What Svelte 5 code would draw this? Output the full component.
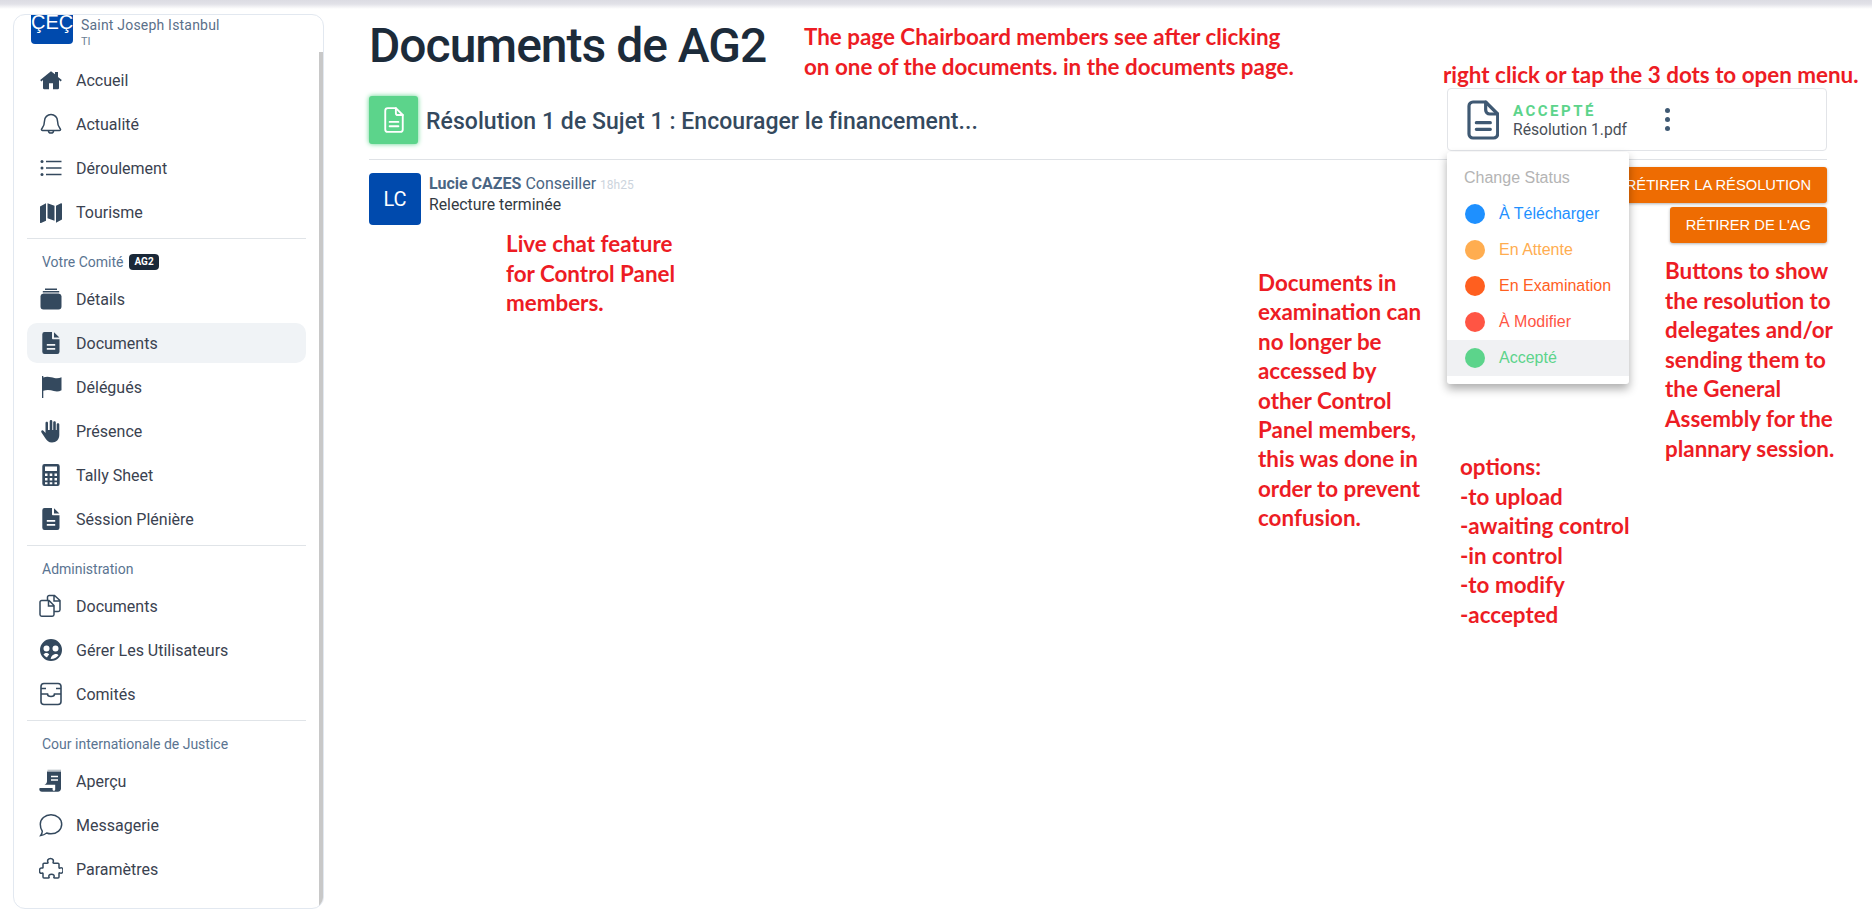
<script lang="ts">
  const ic = {
    home: '<path d="M12 3.200 1.200 12l1.100 1.400L4 12.100V20a1.200 1.200 0 0 0 1.200 1.200H10v-6h4v6h4.800A1.200 1.200 0 0 0 20 20v-7.900l1.700 1.300 1.100-1.400-3.800-3.100V4h-3v2.200Z"/>',
    bell: '<path fill="none" stroke="currentColor" stroke-width="1.500" d="M12 2.500a6.500 6.500 0 0 0-6.500 6.500c0 5.500-2.500 7-3 8.200-.2.700.2 1.300 1 1.300h17c.8 0 1.200-.6 1-1.300-.5-1.200-3-2.700-3-8.200A6.500 6.500 0 0 0 12 2.500Zm-2.600 16a2.600 2.600 0 0 0 5.200 0"/>',
    list: '<circle cx="3" cy="5.500" r="1.500"/><circle cx="3" cy="12" r="1.500"/><circle cx="3" cy="18.500" r="1.500"/><path d="M7 4.700h15.500v1.600H7zM7 11.200h15.500v1.600H7zM7 17.700h15.500v1.600H7z"/>',
    map: '<path d="M1 6.500 7 3.200v17.600l-5 2.200a.8.800 0 0 1-1-.8ZM8.500 3.200l7 2.600v15l-7-2.600ZM17 5.800l5-2.600a.8.800 0 0 1 1 .8v15.500l-6 3.300Z"/>',
    box: '<path d="M6 1.500h12v1.500H6zM3.800 4h16.400v1.600H3.800zM1.500 9a3 3 0 0 1 3-2.500h15a3 3 0 0 1 3 2.500v10.500a3 3 0 0 1-3 3h-15a3 3 0 0 1-3-3Z"/>',
    file: '<path fill-rule="evenodd" d="M5.500 1h7.500v6.200c0 .6.500 1.100 1.100 1.100h6.400v12.500a2.200 2.200 0 0 1-2.200 2.200H5.500a2.200 2.200 0 0 1-2.200-2.200V3.200A2.200 2.200 0 0 1 5.500 1Zm2.300 12v1.700h8.400V13Zm0 4v1.700h8.400V17ZM15 1.300l5.400 5.200H15Z"/>',
    flag: '<path d="M3 1h1.300v22H3ZM4.300 2.500c4-1.700 8-.2 11 .4 2.500.5 5.200.3 7.200-.7v13c-2.500 1.500-5.200 1.500-7.700.8-3-.8-6.500-1.700-10.500-.2Z"/>',
    hand: '<path d="M12 1c.8 0 1.300.6 1.300 1.300V11h.9V3.500c0-.8.600-1.300 1.300-1.300s1.300.5 1.300 1.300V11h.9V5.500c0-.8.600-1.300 1.300-1.300s1.300.5 1.300 1.300V16c0 4.500-3 7.500-7.300 7.500-3.500 0-5-1.700-6.500-4L2.500 13.500c-.5-.7-.3-1.500.3-1.900.6-.4 1.400-.3 1.900.4L6.500 14V4c0-.8.600-1.300 1.300-1.300S9 3.200 9 4v7h1.700V2.300C10.700 1.600 11.200 1 12 1Z"/>',
    calc: '<path fill-rule="evenodd" d="M5.500 1h13A2.200 2.200 0 0 1 20.700 3.200v17.600a2.200 2.200 0 0 1-2.200 2.200h-13a2.200 2.200 0 0 1-2.200-2.200V3.200A2.200 2.200 0 0 1 5.500 1ZM6 3.500V8h12V3.500ZM6 10.500v2.500h2.500v-2.500Zm4.700 0v2.500h2.600v-2.500Zm4.800 0v2.500H18v-2.500ZM6 15v2.500h2.500V15Zm4.700 0v2.500h2.600V15Zm4.800 0v2.500H18V15ZM6 19.300v2h2.500v-2Zm4.700 0v2h2.600v-2Zm4.800 0v2H18v-2Z"/>',
    docs: '<path fill="none" stroke="currentColor" stroke-width="1.500" d="M4 6.500h6l5 5v9a1.700 1.700 0 0 1-1.700 1.700H2.700A1.700 1.700 0 0 1 1 20.500V8.200A1.700 1.700 0 0 1 2.700 6.500Zm5.500 0v5.500H15M8.500 6V3.200a1.700 1.700 0 0 1 1.700-1.700h5.300L21 6.500v9.300a1.700 1.700 0 0 1-1.700 1.700H15M15 1.800v5.200h5.800"/>',
    users: '<path fill-rule="evenodd" d="M12 1a11 11 0 1 1 0 22 11 11 0 0 1 0-22ZM7.500 7.500a3 3 0 1 0 0 6 3 3 0 0 0 0-6Zm9 0a3 3 0 1 0 0 6 3 3 0 0 0 0-6ZM7.500 15c-1.500 0-2.500.6-3 1.500.9 1.200 2 2.300 3.500 3 .4-1.200 1.100-2.300 2.200-3.100-.7-.8-1.600-1.400-2.700-1.400Zm7.500 1.500c-1.500.5-3 2-3.300 4.500h.3c3.200 0 5.800-1.500 7.500-3.800-.8-1-2.500-1.500-4.500-.7Z"/>',
    inbox: '<path fill="none" stroke="currentColor" stroke-width="1.600" d="M5 1.500h14a3 3 0 0 1 3 3v15a3 3 0 0 1-3 3H5a3 3 0 0 1-3-3v-15a3 3 0 0 1 3-3ZM2 12h6.500c0 1.500 1.200 2.500 3.500 2.500s3.500-1 3.500-2.500H22M2 6.500h5M17 6.500h5"/>',
    scroll: '<path d="M8 2.500h14v17c0 2-1.200 3.200-3.200 3.200H3c-1.700 0-2.700-1-2.700-2.500 0-.6.200-1 .5-1.200h12.800v1.500c0 .8.600 1.300 1.300 1.300s1.300-.5 1.300-1.300v-4.700H5.500c1.200-.8 2.500-1.300 2.500-3.500Zm4 4.300v1.500h7V6.800Zm0 3.500v1.500h7v-1.500Z"/><path d="M8.500.8h13.500v1H8.500z" opacity=".45"/>',
    chat: '<path fill="none" stroke="currentColor" stroke-width="1.500" d="M12 1.800c6 0 10.700 4 10.700 9.500S18 20.800 12 20.800c-1.500 0-3-.3-4.300-.8-1.500 1.200-3.500 2.300-6 2.500 1-1.300 1.500-2.800 1.600-4.300C2 16.500 1.300 14 1.300 11.300 1.300 5.800 6 1.800 12 1.800Z"/>',
    puzzle: '<path fill="none" stroke="currentColor" stroke-width="1.500" stroke-linejoin="round" d="M9 5.500c-1-2 0-4 2.500-4s3.500 2 2.500 4c0 .5.300.7.800.7H19c.6 0 1 .4 1 1v3.300c0 .5.400.8.800.6 2-1 3.200 0 3.200 2.400s-1.300 3.300-3.200 2.400c-.4-.2-.8.100-.8.600V20c0 .6-.4 1-1 1h-3.500c-.5 0-.8-.3-.6-.8.800-1.700-.4-2.900-2.400-2.900s-3.200 1.200-2.400 2.900c.2.500-.1.800-.6.800H5c-.6 0-1-.4-1-1v-3.400c0-.5-.4-.8-.8-.6C1.300 16.800.5 15.700.5 13.800S1.300 10.500 3.200 11c.4.200.8-.1.800-.6V7.200c0-.6.400-1 1-1h3.300c.5 0 .8-.3.700-.7Z"/>'
  };

  const sections = [
    {
      items: [
        { icon: 'home', label: 'Accueil' },
        { icon: 'bell', label: 'Actualité' },
        { icon: 'list', label: 'Déroulement' },
        { icon: 'map', label: 'Tourisme' }
      ]
    },
    {
      title: 'Votre Comité',
      badge: 'AG2',
      items: [
        { icon: 'box', label: 'Détails' },
        { icon: 'file', label: 'Documents', active: true },
        { icon: 'flag', label: 'Délégués' },
        { icon: 'hand', label: 'Présence' },
        { icon: 'calc', label: 'Tally Sheet' },
        { icon: 'file', label: 'Séssion Plénière' }
      ]
    },
    {
      title: 'Administration',
      items: [
        { icon: 'docs', label: 'Documents' },
        { icon: 'users', label: 'Gérer Les Utilisateurs' },
        { icon: 'inbox', label: 'Comités' }
      ]
    },
    {
      title: 'Cour internationale de Justice',
      items: [
        { icon: 'scroll', label: 'Aperçu' },
        { icon: 'chat', label: 'Messagerie' },
        { icon: 'puzzle', label: 'Paramètres' }
      ]
    }
  ];

  const statuses = [
    { label: 'À Télécharger', color: '#1e90ff' },
    { label: 'En Attente', color: '#ffad50' },
    { label: 'En Examination', color: '#ff5f1f' },
    { label: 'À Modifier', color: '#ff5544' },
    { label: 'Accepté', color: '#5cd48b', selected: true }
  ];

  const notes = [
    { x: 804, y: 22, lh: 29.6, lines: ['The page Chairboard members see after clicking', 'on one of the documents. in the documents page.'] },
    { x: 1443, y: 60, lh: 29.6, lines: ['right click or tap the 3 dots to open menu.'] },
    { x: 506, y: 229, lh: 29.6, lines: ['Live chat feature', 'for Control Panel', 'members.'] },
    { x: 1258, y: 268, lh: 29.4, lines: ['Documents in', 'examination can', 'no longer be', 'accessed by', 'other Control', 'Panel members,', 'this was done in', 'order to prevent', 'confusion.'] },
    { x: 1665, y: 256, lh: 29.6, lines: ['Buttons to show', 'the resolution to', 'delegates and/or', 'sending them to', 'the General', 'Assembly for the', 'plannary session.'] },
    { x: 1460, y: 452, lh: 29.6, lines: ['options:', '-to upload', '-awaiting control', '-in control', '-to modify', '-accepted'] }
  ];
</script>

<div class="topshade"></div>

<div class="page">
  <aside class="sidebar">
    <div class="brand">
      <div class="logo">ÇEÇ</div>
      <div class="brand-text">
        <div class="school">Saint Joseph Istanbul</div>
        <div class="role">TI</div>
      </div>
    </div>

    {#each sections as section, i}
      {#if i > 0}
        <hr class="sep" />
        <div class="section-title">
          {section.title}
          {#if section.badge}<span class="badge">{section.badge}</span>{/if}
        </div>
      {/if}
      <ul class="nav">
        {#each section.items as item}
          <li class="nav-item" class:active={item.active}>
            <svg class="nav-icon" viewBox="0 0 24 24" fill="currentColor">{@html ic[item.icon]}</svg>
            <span>{item.label}</span>
          </li>
        {/each}
      </ul>
    {/each}
  </aside>

  <main class="main">
    <h1>Documents de AG2</h1>

    <div class="doc-head">
      <div class="doc-badge">
        <svg viewBox="0 0 24 24" fill="none" stroke="#fff" stroke-width="1.500" stroke-linejoin="round" stroke-linecap="round">
          <path d="M7 2.500h6.500L19 8v11.500a2 2 0 0 1-2 2H7a2 2 0 0 1-2-2v-15a2 2 0 0 1 2-2Z" />
          <path d="M13.500 2.500V6.500a1.500 1.500 0 0 0 1.500 1.500h4M8.500 13.500h7M8.500 17h7" />
        </svg>
      </div>
      <h2>Résolution 1 de Sujet 1 : Encourager le financement...</h2>

      <div class="file-card">
        <svg class="file-icon" viewBox="0 0 24 30" fill="none" stroke="#3f5973" stroke-width="2.400" stroke-linejoin="round" stroke-linecap="round">
          <path d="M4.500 1.500h9.500l9 9v15a3 3 0 0 1-3 3H4.500a3 3 0 0 1-3-3v-21a3 3 0 0 1 3-3Z" />
          <path d="M14 1.500v6a3 3 0 0 0 3 3h6M7 17h10.500M7 22h10.500" />
        </svg>
        <div class="file-text">
          <div class="file-status">ACCEPTÉ</div>
          <div class="file-name">Résolution 1.pdf</div>
        </div>
        <div class="dots"><i></i><i></i><i></i></div>
      </div>
    </div>

    <div class="thread">
      <div class="message">
        <div class="avatar">LC</div>
        <div>
          <div class="meta"><b>Lucie CAZES</b> Conseiller <small>18h25</small></div>
          <div class="body">Relecture terminée</div>
        </div>
      </div>
      <div class="actions">
        <button>RÉTIRER LA RÉSOLUTION</button>
        <button>RÉTIRER DE L'AG</button>
      </div>
    </div>
  </main>
</div>

<div class="menu">
  <div class="menu-title">Change Status</div>
  {#each statuses as s}
    <div class="menu-item" class:selected={s.selected} style="color: {s.color}">
      <span class="dot" style="background: {s.color}"></span>{s.label}
    </div>
  {/each}
</div>

{#each notes as note}
  <div class="note" style="left: {note.x}px; top: {note.y}px; line-height: {note.lh}px">
    {#each note.lines as line}<div>{line}</div>{/each}
  </div>
{/each}

<style>
  :global(body) {
    margin: 0;
    background: #fff;
    font-family: Roboto, "Liberation Sans", sans-serif;
    overflow: hidden;
  }

  .topshade {
    position: absolute;
    left: 0;
    right: 0;
    top: 0;
    height: 9px;
    background: linear-gradient(#dcdce3, #e2e2e8 45%, #fff);
  }

  .page {
    display: flex;
    height: 922px;
    padding: 14px 45px 13px 13px;
    box-sizing: border-box;
  }

  .sidebar {
    width: 311px;
    flex: none;
    box-sizing: border-box;
    border: 1px solid #e2e8f0;
    border-radius: 12px;
    padding: 0 13px;
    overflow: hidden;
    position: relative;
  }

  .sidebar::after {
    content: "";
    position: absolute;
    right: 0;
    top: 37px;
    bottom: 0;
    width: 4px;
    background: #c8c8c8;
  }

  .brand {
    display: flex;
    height: 45px;
    padding-left: 4px;
    gap: 8px;
  }

  .logo {
    width: 42px;
    height: 42px;
    margin-top: -13px;
    background: #004aad;
    border-radius: 4px;
    color: #fff;
    font-family: "Liberation Sans", sans-serif;
    font-size: 20px;
    line-height: 40px;
    text-align: center;
    white-space: nowrap;
    flex: none;
  }

  .school {
    margin-top: 2px;
    font-size: 14px;
    line-height: 17px;
    color: #5b7089;
    letter-spacing: 0.2px;
  }

  .role {
    font-size: 11px;
    line-height: 15px;
    color: #6b7f96;
  }

  .sep {
    border: none;
    border-top: 1px solid #e0e4e8;
    margin: 6px 0 0;
    width: 279px;
  }

  .section-title {
    height: 40px;
    padding: 6px 0 0 15px;
    box-sizing: border-box;
    font-size: 14px;
    line-height: 16px;
    color: #5a7491;
    display: flex;
    align-items: center;
    gap: 6px;
  }

  .badge {
    background: #1a2838;
    color: #fff;
    font-size: 10px;
    font-weight: 700;
    line-height: 16px;
    padding: 0 5px;
    border-radius: 4px;
  }

  .nav {
    list-style: none;
    margin: 0;
    padding: 0;
    width: 279px;
  }

  .nav-item {
    height: 40px;
    margin-top: 4px;
    display: flex;
    align-items: center;
    gap: 13px;
    padding-left: 12px;
    border-radius: 10px;
    font-size: 16px;
    color: #3a4250;
  }

  .nav-item:first-child {
    margin-top: 0;
  }

  .nav-item.active {
    background: #f0f3f6;
  }

  .nav-icon {
    width: 24px;
    height: 24px;
    color: #34495e;
    flex: none;
  }

  .main {
    flex: 1;
    margin-left: 45px;
    min-width: 0;
  }

  h1 {
    margin: 0;
    font-weight: 500;
    font-size: 48px;
    line-height: 64px;
    color: #1c2b3a;
    letter-spacing: -1px;
  }

  .doc-head {
    display: flex;
    align-items: center;
    height: 82px;
    padding-top: 2px;
    border-bottom: 1px solid #dfe2e6;
    box-sizing: border-box;
  }

  .doc-badge {
    width: 49px;
    height: 48px;
    background: #5cd48b;
    box-shadow: 0 0 5px #5cd48b;
    border-radius: 3px;
    display: flex;
    align-items: center;
    justify-content: center;
    flex: none;
  }

  .doc-badge svg {
    width: 30px;
    height: 30px;
  }

  h2 {
    margin: 3px 0 0 8px;
    font-size: 23px;
    font-weight: 500;
    color: #34495e;
    letter-spacing: 0.05px;
    flex: 1;
  }

  .file-card {
    width: 380px;
    height: 63px;
    box-sizing: border-box;
    border: 1px solid #e2e4e8;
    border-radius: 4px;
    display: flex;
    align-items: center;
    padding-left: 19px;
    flex: none;
  }

  .file-icon {
    width: 32px;
    height: 40px;
    flex: none;
  }

  .file-text {
    margin: 2px 0 0 14px;
  }

  .file-status {
    color: #5cd48b;
    font-size: 15px;
    line-height: 18px;
    font-weight: 700;
    letter-spacing: 2.500px;
  }

  .file-name {
    color: #4a4f57;
    font-size: 15.700px;
    line-height: 19px;
  }

  .dots {
    margin-left: 38px;
    display: flex;
    flex-direction: column;
    gap: 4px;
  }

  .dots i {
    width: 5px;
    height: 5px;
    border-radius: 50%;
    background: #3f5973;
  }

  .thread {
    display: flex;
    justify-content: space-between;
    padding-top: 7px;
  }

  .message {
    display: flex;
    gap: 8px;
    padding-top: 6px;
  }

  .avatar {
    width: 52px;
    height: 52px;
    background: #004aad;
    border-radius: 4px;
    color: #fff;
    font-size: 20px;
    display: flex;
    align-items: center;
    justify-content: center;
    flex: none;
  }

  .meta {
    margin-top: 2px;
    font-size: 16px;
    line-height: 18px;
    color: #4a6583;
  }

  .meta small {
    font-size: 12px;
    color: #ccd4dd;
  }

  .body {
    margin-top: 2px;
    font-size: 15.800px;
    line-height: 18px;
    color: #333a42;
  }

  .actions {
    display: flex;
    flex-direction: column;
    align-items: flex-end;
    gap: 4px;
  }

  button {
    height: 36px;
    padding: 0 16px;
    border: none;
    border-radius: 3px;
    background: #ee6c02;
    color: #fff;
    font-family: "Liberation Sans", sans-serif;
    font-size: 14.700px;
    box-shadow: 0 1px 3px rgba(0, 0, 0, 0.3);
  }

  .menu {
    position: absolute;
    left: 1447px;
    top: 152px;
    width: 182px;
    height: 232px;
    box-sizing: border-box;
    padding-top: 9px;
    background: #fff;
    border-radius: 3px;
    box-shadow: 0 5px 10px rgba(0, 0, 0, 0.32);
    font-family: "Liberation Sans", sans-serif;
    font-size: 16px;
  }

  .menu-title {
    height: 35px;
    line-height: 34px;
    padding-left: 17px;
    color: #b4b4b4;
  }

  .menu-item {
    height: 36px;
    display: flex;
    align-items: center;
    padding-left: 18px;
    gap: 14px;
  }

  .menu-item.selected {
    background: #f0f1f3;
  }

  .dot {
    width: 20px;
    height: 20px;
    border-radius: 50%;
    flex: none;
  }

  .note {
    position: absolute;
    font-family: Lato, sans-serif;
    font-weight: 700;
    font-size: 22.400px;
    color: #ed1c24;
    white-space: nowrap;
  }
</style>
